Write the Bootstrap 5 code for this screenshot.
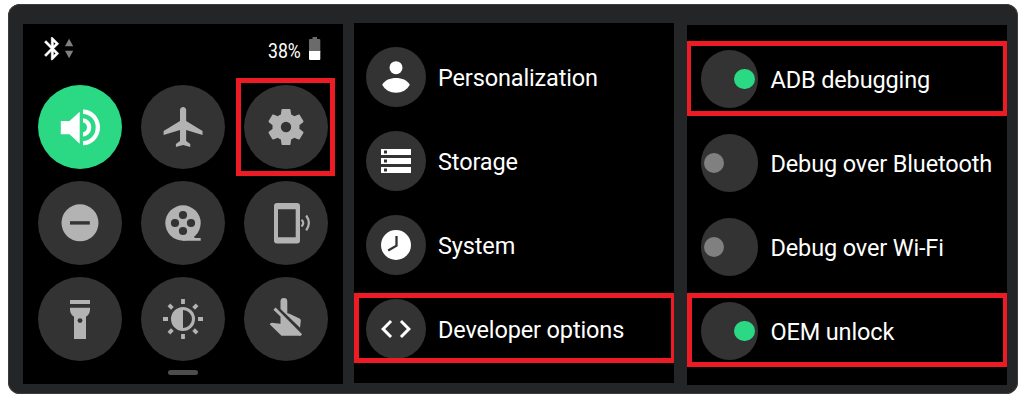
<!DOCTYPE html>
<html lang="en">
<head>
<meta charset="utf-8">
<meta name="viewport" content="width=device-width, initial-scale=1">
<title>Watch settings</title>
<link href="https://cdn.jsdelivr.net/npm/bootstrap@5.3.0/dist/css/bootstrap.min.css" rel="stylesheet">
<style>
body{background:#fff;font-family:Roboto,"Liberation Sans",sans-serif;overflow:hidden}
.board{width:1010px;height:390px;margin:4px 0 0 8px;padding:19px 11px 0 15px;background:#242527;border-radius:12px;box-shadow:inset 0 0 0 1px #3b3c3e}
.screen{width:320px;height:360px;background:#000;color:#fff;overflow:hidden}
.screen-quick{margin-top:1px;margin-right:11px}
.screen-list{margin-right:13px}
.screen-dev{margin-top:2px}
.status{height:61px;padding:13px 22px 0 21px}
.pct{font-size:20.5px;line-height:24px;width:33px;margin-right:8px;margin-top:2px}
.pct span{display:inline-block;transform:scaleX(.86);transform-origin:0 50%}
.tiles{display:grid;grid-template-columns:repeat(3,84px);gap:12px 19px;padding-left:15px}
.tile{width:84px;height:84px;background:#333;color:#b3b3b3}
.tile.on{background:#2bd984;color:#fff}
.handle{width:30px;height:5px;background:#4d4d4d;margin:9px 0 0 145px}
.entry{height:84px;font-size:23.5px;letter-spacing:-.14px;line-height:28px;white-space:nowrap}
.entry .label{padding-top:2px}
.entry .disc{width:60px;height:60px;background:#333;margin:0 12px}
.screen-list{padding-top:12px}
.screen-dev{padding-top:12px}
.toggle{width:57.5px;height:57.5px;background:#333;margin:0 12.5px 0 13.5px;padding:0 3px}
.knob{width:20.8px;height:20.8px;background:#808080}
.toggle.on .knob{background:#2bd984}
.marked{position:relative}
.marked::after{content:"";position:absolute;border:5px solid #ed1c24;inset:var(--box)}
.mark-tile{--box:-7px -7px -7px -8px}
.mark-dev{--box:6px 0 8px 0}
.mark-dev::after{border-right-width:3px}
.mark-adb{--box:4px 0 5px 0}
.mark-adb::after{border-left-width:4px;border-right-width:4px}
.mark-oem{--box:4px 0 6px 0}
.mark-oem::after{border-right-width:4px}
svg{display:block;fill:currentColor}
.cut{fill:#333}
</style>
</head>
<body>
<main class="board d-flex align-items-start">

<section class="screen screen-quick flex-shrink-0">
  <div class="status d-flex align-items-start">
    <svg width="32" height="24" viewBox="0 0 32 24">
      <path stroke="currentColor" stroke-width=".4" transform="translate(-5.2 -2.1) scale(1.13 1.14)" d="M17.71 7.71 12 2h-1v7.59L6.41 5 5 6.41 10.59 12 5 17.59 6.41 19 11 14.41V22h1l5.71-5.71-4.3-4.29 4.3-4.29zM13 5.83l1.88 1.88L13 9.59V5.83zm1.88 10.46L13 18.17v-3.76l1.88 1.88z"/>
      <path fill="#808080" d="M21 9.2 25.1 1.7 29.2 9.2zM21 13.8h8.2L25.1 21.3z"/>
    </svg>
    <div class="pct ms-auto"><span>38%</span></div>
    <svg class="flex-shrink-0" width="12" height="24" viewBox="0 0 12 24">
      <path fill="#6b6b6b" d="M3.5 0h4.5v2h2.3q1 0 1 1v12H0V3q0-1 1-1h2.5z"/>
      <path d="M0 14h11.3v8q0 1-1 1H1q-1 0-1-1z"/>
    </svg>
  </div>
  <div class="tiles">
    <div class="tile on rounded-circle"><svg width="84" height="84"><path d="M22.8 36h8.7l10.2-9.3v32L31.5 49.3h-8.7z"/><path d="M45 24.5a17 17.9 0 0 1 0 35.8v-4.4a12.7 13.5 0 0 0 0-27z"/><path d="M45 33.3a8.3 9.1 0 0 1 0 18.2v-4.3a4 4.8 0 0 0 0-9.6z"/></svg></div>
    <div class="tile rounded-circle"><svg width="84" height="84"><path transform="translate(18.5 18) scale(2.05 2)" d="M21 16v-2l-8-5V3.5c0-.83-.67-1.5-1.5-1.5S10 2.67 10 3.5V9l-8 5v2l8-2.5V19l-2 1.5V22l3.5-1 3.5 1v-1.5L13 19v-5.5l8 2.5z"/></svg></div>
    <div class="tile rounded-circle marked mark-tile"><svg width="84" height="84"><path transform="translate(20.4 20.4) scale(1.8)" d="M19.43 12.98c.04-.32.07-.64.07-.98s-.03-.66-.07-.98l2.11-1.65c.19-.15.24-.42.12-.64l-2-3.46c-.12-.22-.39-.3-.61-.22l-2.49 1c-.52-.4-1.08-.73-1.69-.98l-.38-2.65C14.46 2.18 14.25 2 14 2h-4c-.25 0-.46.18-.49.42l-.38 2.65c-.61.25-1.17.59-1.69.98l-2.49-1c-.23-.09-.49 0-.61.22l-2 3.46c-.13.22-.07.49.12.64l2.11 1.65c-.04.32-.07.65-.07.98s.03.66.07.98l-2.11 1.65c-.19.15-.24.42-.12.64l2 3.46c.12.22.39.3.61.22l2.49-1c.52.4 1.08.73 1.69.98l.38 2.65c.03.24.24.42.49.42h4c.25 0 .46-.18.49-.42l.38-2.65c.61-.25 1.17-.59 1.69-.98l2.49 1c.23.09.49 0 .61-.22l2-3.46c.12-.22.07-.49-.12-.64l-2.11-1.65z"/><circle class="cut" cx="42" cy="42" r="5.2"/></svg></div>
    <div class="tile rounded-circle"><svg width="84" height="84"><circle cx="42" cy="41.8" r="18.5"/><path class="cut" d="M32 40.2h19.8v3.4H32z"/></svg></div>
    <div class="tile rounded-circle"><svg width="84" height="84"><circle cx="42" cy="42" r="17.7"/><path d="M42 59.7V56l10-1.2 2 2.2h5.7v2.7z"/><g class="cut"><circle cx="42" cy="34" r="4.1"/><circle cx="42" cy="50" r="4.1"/><circle cx="34" cy="42" r="4.1"/><circle cx="50" cy="42" r="4.1"/></g></svg></div>
    <div class="tile rounded-circle"><svg width="84" height="84"><path fill-rule="evenodd" d="M33 22h20q3 0 3 3v34.5q0 3-3 3H33q-3 0-3-3V25q0-3 3-3zM34 28.3v28h17.7v-28z"/><path fill="none" stroke="currentColor" stroke-width="2.2" d="M57.5 38.800Q61 42 57.500 45.600M62.200 34.500Q67.500 42 62.200 49.400"/></svg></div>
    <div class="tile rounded-circle"><svg width="84" height="84"><path d="M32 23h20v4H32zM32 30.800h20V33q-.4 4.500-4 6.800V62H36V39.800q-3.600-2.300-4-6.800z"/><circle class="cut" cx="42" cy="43.600" r="2.400"/></svg></div>
    <div class="tile rounded-circle"><svg width="84" height="84"><path fill-rule="evenodd" d="M42 30a12 12 0 1 0 0 24 12 12 0 0 0 0-24zM42 33a9 9 0 0 1 0 18z"/><path fill="none" stroke="currentColor" stroke-width="3.800" d="M42 22v5M42 57v5M22 42h5M57 42h5M27.900 27.900l3.500 3.500M52.600 52.600l3.500 3.500M27.900 56.100l3.500-3.500M52.600 31.400l3.500-3.500"/></svg></div>
    <div class="tile rounded-circle"><svg width="84" height="84"><path d="M36.500 32V24.500a3.400 3.400 0 0 1 6.800 0v11.700l2.200.6L55.500 41.500q1.500.7 1.300 2.500l-.8 6.700z"/><path d="M29.400 32.800 31.600 30.600 58.100 57.300 56.200 59.300 55.200 58.700H37.500L25.700 47.200q1.300-1.900 3.800-1.300l7 .9V39.600z"/></svg></div>
  </div>
  <div class="handle rounded-pill"></div>
</section>

<section class="screen screen-list flex-shrink-0">
  <div class="entry d-flex align-items-center"><div class="disc rounded-circle"><svg width="60" height="60"><circle cx="30" cy="20.700" r="6.500"/><path d="M16.200 37.700C19 33 24 31 30 31s11 2 13.800 6.700C41 43 36 45.700 30 45.700S19 43 16.200 37.700z"/></svg></div><span class="label">Personalization</span></div>
  <div class="entry d-flex align-items-center"><div class="disc rounded-circle"><svg width="60" height="60"><path d="M15 18h30v6H15zM15 27h30v6H15zM15 36h30v6H15z"/><path class="cut" d="M18 19.500h3v3h-3zM18 28.500h3v3h-3zM18 37.500h3v3h-3z"/></svg></div><span class="label">Storage</span></div>
  <div class="entry d-flex align-items-center"><div class="disc rounded-circle"><svg width="60" height="60"><circle cx="30" cy="30" r="15"/><path fill="none" stroke="#333" stroke-width="2.300" d="M30.500 21v9.700l-8.300 4.900"/></svg></div><span class="label">System</span></div>
  <div class="entry d-flex align-items-center marked mark-dev"><div class="disc rounded-circle"><svg width="60" height="60"><path transform="translate(12 12) scale(1.5)" d="M9.400 16.600 4.800 12l4.600-4.600L8 6l-6 6 6 6zM14.600 16.600l4.600-4.600-4.600-4.600L16 6l6 6-6 6z"/></svg></div><span class="label">Developer options</span></div>
</section>

<section class="screen screen-dev flex-shrink-0">
  <div class="entry d-flex align-items-center marked mark-adb"><div class="toggle on rounded-circle d-flex align-items-center justify-content-end"><div class="knob rounded-circle"></div></div><span class="label">ADB debugging</span></div>
  <div class="entry d-flex align-items-center"><div class="toggle rounded-circle d-flex align-items-center"><div class="knob rounded-circle"></div></div><span class="label">Debug over Bluetooth</span></div>
  <div class="entry d-flex align-items-center"><div class="toggle rounded-circle d-flex align-items-center"><div class="knob rounded-circle"></div></div><span class="label">Debug over Wi-Fi</span></div>
  <div class="entry d-flex align-items-center marked mark-oem"><div class="toggle on rounded-circle d-flex align-items-center justify-content-end"><div class="knob rounded-circle"></div></div><span class="label">OEM unlock</span></div>
</section>

</main>
<script src="https://cdn.jsdelivr.net/npm/bootstrap@5.3.0/dist/js/bootstrap.bundle.min.js"></script>
</body>
</html>
